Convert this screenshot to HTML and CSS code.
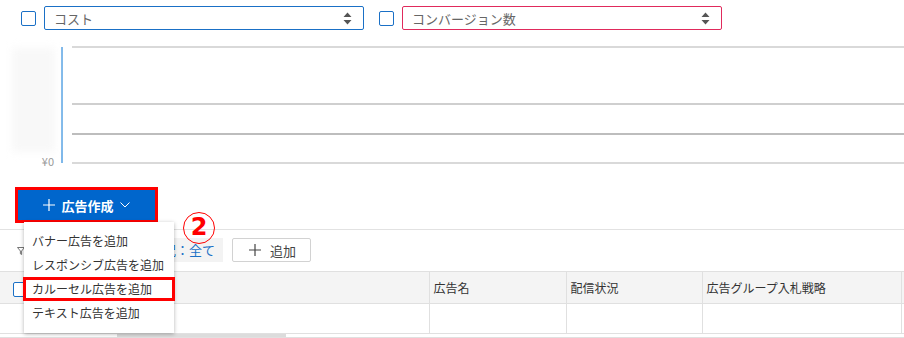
FILE: index.html
```html
<!DOCTYPE html>
<html lang="ja">
<head>
  <meta charset="UTF-8" />
  <title>広告一覧</title>
  <link rel="stylesheet" href="styles.css">
</head>
<body>
  <div class="metrics">
    <span class="check"></span>
    <div class="select blue">
      <span>コスト</span>
      <svg class="arrows" width="9" height="13" viewBox="0 0 9 13"><path d="M4.5 0.5 L8.5 5 H0.5 Z M4.5 12.5 L8.5 8 H0.5 Z" fill="#555"/></svg>
    </div>
    <span class="check"></span>
    <div class="select pink">
      <span>コンバージョン数</span>
      <svg class="arrows" width="9" height="13" viewBox="0 0 9 13"><path d="M4.5 0.5 L8.5 5 H0.5 Z M4.5 12.5 L8.5 8 H0.5 Z" fill="#555"/></svg>
    </div>
  </div>

  <div class="chart">
    <div class="yaxis">
      <div class="blur"></div>
      <span class="tick">¥0</span>
    </div>
    <div class="axis-line"></div>
    <div class="grid">
      <div class="band tall"></div>
      <div class="band mid"></div>
      <div class="band low"></div>
      <div class="base"></div>
    </div>
  </div>

  <div class="create">
    <div class="mark">
      <button class="btn-create">
        <svg width="12" height="12" viewBox="0 0 12 12"><path d="M6 0 V12 M0 6 H12" stroke="#fff" stroke-width="1.2"/></svg>
        <span>広告作成</span>
        <svg width="10" height="6" viewBox="0 0 10 6"><path d="M0.5 0.5 L5 5 L9.5 0.5" stroke="#fff" stroke-width="1" fill="none"/></svg>
      </button>
    </div>
  </div>

  <div class="filters">
    <svg class="funnel" width="8" height="8" viewBox="0 0 8 8"><path d="M0.5 0.5 H7.5 L4.6 4 V7.5 L3.4 6.8 V4 Z" stroke="#666" stroke-width="0.9" fill="none"/></svg>
    <span class="pill">配信状況：全て</span>
    <button class="btn-add">
      <svg width="12" height="12" viewBox="0 0 12 12"><path d="M6 0 V12 M0 6 H12" stroke="#444" stroke-width="1.2"/></svg>
      <span>追加</span>
    </button>
  </div>

  <table class="ads">
    <colgroup>
      <col class="w-name">
      <col class="w-ad">
      <col class="w-status">
      <col class="w-bid">
      <col class="w-end">
    </colgroup>
    <thead>
      <tr>
        <th class="c-name"><span class="check"></span></th>
        <th>広告名</th>
        <th>配信状況</th>
        <th>広告グループ入札戦略</th>
        <th></th>
      </tr>
    </thead>
    <tbody>
      <tr><td></td><td></td><td></td><td></td><td></td></tr>
    </tbody>
  </table>
  <div class="scroll"><div class="thumb"></div></div>

  <ul class="menu">
    <li>バナー広告を追加</li>
    <li>レスポンシブ広告を追加</li>
    <li class="marked">カルーセル広告を追加</li>
    <li>テキスト広告を追加</li>
  </ul>

  <span class="step">2</span>
</body>
</html>
```

FILE: styles.css
```css
body {
  margin: 0;
  font-family: "Noto Sans CJK JP", "Noto Sans", sans-serif;
  color: #333;
  background: #fff;
  width: 904px;
  height: 338px;
  overflow: hidden;
  position: relative;
}

.metrics {
  display: flex;
  align-items: center;
  padding: 6px 0 0 21px;
}

.check {
  display: inline-block;
  box-sizing: border-box;
  width: 15px;
  height: 15px;
  border: 1.5px solid #1a70c6;
  border-radius: 2px;
  background: #fff;
}

.select {
  box-sizing: border-box;
  width: 320px;
  height: 24px;
  margin: 0 15px 0 8px;
  border: 1px solid;
  border-radius: 2px;
  display: flex;
  align-items: center;
  justify-content: space-between;
  padding: 0 11px 0 9px;
  font-size: 13px;
  color: #666;
}

.select.blue { border-color: #1a70c6; }
.select.pink { border-color: #e02a5c; }

.chart {
  display: flex;
  margin-top: 16px;
  height: 124px;
}

.yaxis {
  width: 61px;
  position: relative;
}

.blur {
  position: absolute;
  left: 12px;
  top: 2px;
  width: 43px;
  height: 104px;
  background: #f8f8f8;
  filter: blur(4px);
}

.tick {
  position: absolute;
  right: 7px;
  top: 107px;
  font-size: 11px;
  color: #999;
}

.axis-line {
  width: 2px;
  height: 116px;
  margin-top: 1px;
  background: #7eb8ea;
}

.grid {
  flex: 1;
  margin-left: 9px;
}

.band {
  border-top: 2px solid #d9d9d9;
  box-sizing: border-box;
}

.band.tall { height: 57px; }
.band.mid { height: 30px; border-top-color: #cfcfcf; }
.band.low { height: 29px; border-top-color: #bdbdbd; }
.base { border-top: 2px solid #d9d9d9; }

.create {
  padding: 17px 0 0 15px;
  height: 42px;
  border-bottom: 1px solid #e2e2e2;
}

.mark {
  display: inline-block;
  border: 3px solid #f00;
}

.btn-create {
  display: flex;
  align-items: center;
  gap: 6px;
  width: 137px;
  height: 30px;
  justify-content: center;
  border: none;
  background: #0066cc;
  color: #fff;
  font-family: inherit;
  font-size: 13px;
  font-weight: 700;
  padding: 0;
}

.filters {
  display: flex;
  align-items: center;
  height: 24px;
  margin-top: 8px;
  padding-left: 17px;
}

.funnel { margin-top: 2px; }

.pill {
  margin-left: 92px;
  height: 24px;
  line-height: 24px;
  padding: 0 8px 0 7px;
  background: #f3f3f3;
  color: #1a70c6;
  font-size: 13px;
}

.btn-add {
  box-sizing: border-box;
  margin-left: 9px;
  width: 79px;
  height: 24px;
  border: 1px solid #d2d2d2;
  border-radius: 2px;
  background: #fff;
  display: flex;
  align-items: center;
  gap: 9px;
  padding: 0 0 0 16px;
  font-family: inherit;
  font-size: 13px;
  color: #444;
}

.ads {
  margin-top: 9px;
  width: 904px;
  border-collapse: collapse;
  table-layout: fixed;
  font-size: 12px;
}

.w-name { width: 429px; }
.w-ad { width: 137px; }
.w-status { width: 136px; }
.w-bid { width: 199px; }
.w-end { width: 3px; }

.ads th,
.ads td {
  border: 1px solid #e0e0e0;
  text-align: left;
  font-weight: 400;
  padding: 0 4px;
}

.ads th {
  height: 31px;
  background: #f4f4f4;
  color: #333;
}

.ads td { height: 29px; }

.ads tr > :first-child { border-left: none; }
.ads tr > :last-child { padding: 0; }

.c-name { padding-left: 13px !important; }
.c-name .check { vertical-align: middle; }

.scroll {
  height: 3px;
  border-bottom: 1px solid #e0e0e0;
  position: relative;
}

.thumb {
  position: absolute;
  left: 117px;
  width: 169px;
  top: 0;
  height: 3px;
  background: #dcdcdc;
}

.menu {
  position: absolute;
  left: 24px;
  top: 222px;
  width: 150px;
  height: 111px;
  box-sizing: border-box;
  margin: 0;
  padding: 7px 0 0;
  list-style: none;
  background: #fff;
  box-shadow: 0 1px 4px rgba(0, 0, 0, 0.3);
  font-size: 12px;
  color: #333;
}

.menu li {
  height: 24px;
  line-height: 24px;
  padding-left: 8px;
  white-space: nowrap;
}

.menu li.marked {
  outline: 3px solid #f00;
  outline-offset: -3px;
  margin: 0 -1px;
  padding-left: 9px;
}

.step {
  position: absolute;
  left: 183px;
  top: 212px;
  width: 32px;
  height: 32px;
  box-sizing: border-box;
  border: 1.5px solid #f00;
  border-radius: 50%;
  color: #f00;
  font-family: "DejaVu Sans", sans-serif;
  font-weight: 700;
  font-size: 24px;
  line-height: 29px;
  text-align: center;
}
```
